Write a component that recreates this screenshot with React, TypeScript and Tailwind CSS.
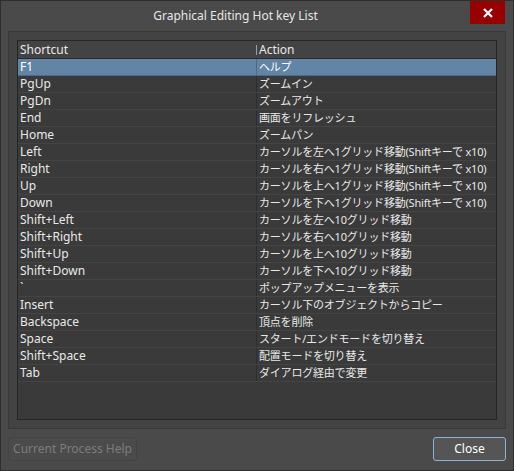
import React from 'react'

const ROWS: [string, string][] = [
  ['F1', 'ヘルプ'],
  ['PgUp', 'ズームイン'],
  ['PgDn', 'ズームアウト'],
  ['End', '画面をリフレッシュ'],
  ['Home', 'ズームパン'],
  ['Left', 'カーソルを左へ1グリッド移動(Shiftキーで x10)'],
  ['Right', 'カーソルを右へ1グリッド移動(Shiftキーで x10)'],
  ['Up', 'カーソルを上へ1グリッド移動(Shiftキーで x10)'],
  ['Down', 'カーソルを下へ1グリッド移動(Shiftキーで x10)'],
  ['Shift+Left', 'カーソルを左へ10グリッド移動'],
  ['Shift+Right', 'カーソルを右へ10グリッド移動'],
  ['Shift+Up', 'カーソルを上へ10グリッド移動'],
  ['Shift+Down', 'カーソルを下へ10グリッド移動'],
  ['`', 'ポップアップメニューを表示'],
  ['Insert', 'カーソル下のオブジェクトからコピー'],
  ['Backspace', '頂点を削除'],
  ['Space', 'スタート/エンドモードを切り替え'],
  ['Shift+Space', '配置モードを切り替え'],
  ['Tab', 'ダイアログ経由で変更'],
]

export default function App() {
  return (
    <div className="w-[514px] h-[471px] bg-[#4a4a4a] border border-[#2e2e2e] flex flex-col text-[12px] text-[#e8e8e8]"
      style={{ fontFamily: '"Noto Sans", "Noto Sans CJK JP", sans-serif' }}>
      {/* title bar */}
      <div className="h-[30px] flex items-start shrink-0">
        <div className="flex-1 h-[30px] flex items-center justify-center text-[12px] text-[#e6e6e6]">
          Graphical Editing Hot key List
        </div>
        <button className="w-[35px] h-[23px] mr-[8px] bg-[#990000] flex items-center justify-center">
          <svg width="10" height="10" viewBox="0 0 10 10">
            <path d="M1 1 L9 9 M9 1 L1 9" stroke="#ffffff" strokeWidth="2.2" />
          </svg>
        </button>
      </div>

      {/* panel */}
      <div className="mx-[7px] h-[398px] border border-[#393939] bg-[#434343] p-[8px] shrink-0">
        <div className="h-full border border-[#262626] bg-[#3a3a3a] flex flex-col overflow-hidden">
          <div className="h-[18px] flex border-b border-[#2a2a2a] bg-[#434343] shrink-0">
            <div className="w-[238px] shrink-0 pl-[2px] flex items-center">Shortcut</div>
            <div className="flex-1 flex items-center">
              <div className="w-px h-[10px] bg-[#a0a0a0] mr-[2px]" />
              Action
            </div>
          </div>
          {ROWS.map(([k, a], i) => (
            <div key={k}
              className={`h-[17px] flex shrink-0 border-b ${i === 0 ? 'bg-[#6284a5] border-[#4f6a85] text-white' : 'border-[#444444]'}`}>
              <div className="w-[238px] shrink-0 pl-[2px] flex items-center whitespace-nowrap">{k}</div>
              <div className={`flex-1 min-w-0 overflow-hidden pl-[2px] flex items-center whitespace-nowrap text-[11px] tracking-[-0.2px] border-l ${i === 0 ? 'border-[#4f6a85]' : 'border-[#2e2e2e]'}`}>{a}</div>
            </div>
          ))}
        </div>
      </div>

      {/* buttons */}
      <div className="flex justify-between px-[7px] mt-[8px]">
        <button className="w-[129px] h-[24px] rounded-[3px] border border-[#444444] bg-[#4b4b4b] text-[#7c7c7c]">
          Current Process Help
        </button>
        <button className="w-[73px] h-[24px] rounded-[3px] border border-[#8db3da] bg-[#555555] text-white">
          Close
        </button>
      </div>
    </div>
  )
}
